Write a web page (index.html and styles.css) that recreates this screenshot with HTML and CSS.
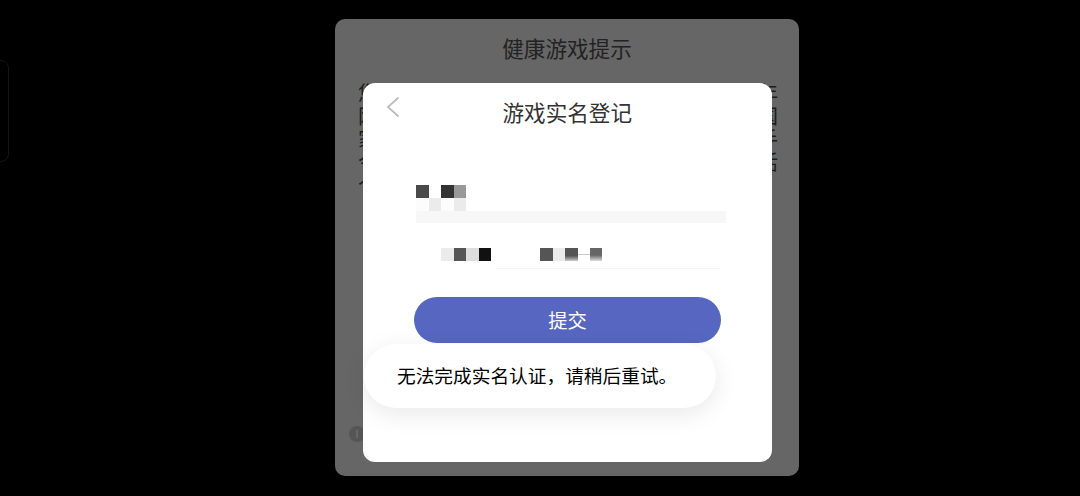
FILE: index.html
```html
<!DOCTYPE html>
<html lang="zh-CN">
<head>
<meta charset="utf-8">
<title>游戏实名登记</title>
<link rel="stylesheet" href="styles.css">
</head>
<body>
<div class="edge"></div>
<main class="dialog">
  <h2 class="dialog-title">健康游戏提示</h2>
  <div class="notice">
    <p><span>您</span><span>年</span></p>
    <p><span>网</span><span>国</span></p>
    <p><span>家</span><span>手</span></p>
    <p><span>今</span><span>活</span></p>
    <p><span>个</span></p>
  </div>
  <svg class="info" viewBox="0 0 16 16" aria-hidden="true"><circle cx="8" cy="8" r="8" fill="#555"/><rect x="7" y="4" width="2" height="8" fill="#666"/></svg>
  <section class="card">
    <header class="card-head">
      <svg class="back" viewBox="0 0 14 22" aria-hidden="true"><path d="M12.5 1.5 2 11l10.500 9.500" fill="none" stroke="#bdbdbd" stroke-width="1.800"/></svg>
      <h2 class="card-title">游戏实名登记</h2>
    </header>
    <div class="form">
      <div class="mosaic">
        <i class="px c4"></i><i class="px"></i><i class="px c3"></i><i class="px c9"></i>
        <i class="px cf"></i><i class="px ce"></i><i class="px cf"></i><i class="px ce"></i>
      </div>
      <div class="name-bar"></div>
      <div class="id-row">
        <div class="id-label">
          <i class="px ce"></i><i class="px c5"></i><i class="px cd"></i><i class="px c1"></i>
        </div>
        <div class="id-value">
          <i class="px c5"></i><i class="px ce"></i><i class="px fade"></i><i class="dash"></i><i class="px fade2"></i>
        </div>
      </div>
      <button class="submit" type="button">提交</button>
    </div>
  </section>
  <div class="toast">无法完成实名认证，请稍后重试。</div>
</main>
</body>
</html>
```
FILE: styles.css
```css
* { box-sizing: border-box; }
html, body { margin: 0; height: 496px; overflow: hidden; }
body {
  background: #000;
  font-family: "Noto Sans CJK SC", "Noto Sans", sans-serif;
  padding: 19px 0 0 335px;
}
.edge {
  position: absolute;
  left: -12px;
  top: 60px;
  width: 21px;
  height: 102px;
  border: 1px solid #141414;
  border-radius: 8px;
}
.dialog {
  position: relative;
  width: 464px;
  height: 457px;
  background: #666;
  border-radius: 10px;
}
.dialog-title {
  margin: 0;
  padding-top: 13px;
  height: 62px;
  text-align: center;
  font-size: 21.6px;
  line-height: 32px;
  font-weight: 400;
  color: #222;
}
.notice {
  margin-left: 23px;
  width: 420px;
  font-size: 20px;
  line-height: 23px;
  color: #1c1c1c;
}
.notice p { margin: 0; display: flex; justify-content: space-between; }
.info { position: absolute; left: 14px; top: 407px; width: 16px; height: 16px; }
.card {
  position: absolute;
  left: 27.5px;
  top: 64px;
  width: 409.5px;
  height: 379px;
  background: #fff;
  border-radius: 12px;
}
.card-head { position: relative; height: 58px; padding-top: 13px; }
.back { position: absolute; left: 23px; top: 13px; width: 14px; height: 22px; display: block; }
.card-title {
  margin: 0;
  text-align: center;
  font-size: 21.6px;
  line-height: 32px;
  font-weight: 400;
  color: #333;
}
.form { padding: 44px 0 0 51.5px; }
.px { display: block; width: 12.5px; height: 13px; }
.mosaic { margin-left: 2px; display: grid; grid-template-columns: repeat(4, 12.5px); width: 50px; }
.name-bar { margin-left: 2px; width: 310px; height: 12px; background: #f7f7f7; }
.id-row { display: flex; height: 46px; margin-left: 27px; position: relative; }
.id-label { display: flex; width: 54px; height: 13px; margin-top: 25px; }
.id-value {
  display: flex;
  width: 225px;
  height: 21px;
  margin: 25px 0 0 0;
  padding-left: 45px;
  border-bottom: 1px solid #f5f5f5;
}
.id-value .px { height: 13px; }
.dash { display: block; width: 12px; height: 1px; margin-top: 6px; background: #ccc; }
.c1 { background: #111; }
.c3 { background: #333; }
.c4 { background: #4a4a4a; }
.c5 { background: #555; }
.c9 { background: #999; }
.cd { background: #ddd; }
.ce { background: #ebebeb; }
.cf { background: #fcfcfc; }
.fade { background: linear-gradient(#555 60%, #ccc); }
.fade2 { background: linear-gradient(#666 55%, #ddd); }
.submit {
  display: block;
  margin: 28px 0 0 0;
  width: 307px;
  height: 46px;
  border: 0;
  border-radius: 23px;
  background: #5767c1;
  color: #fff;
  font: 400 19.300px/44px "Noto Sans CJK SC", sans-serif;
  padding: 0;
}
.toast {
  position: absolute;
  left: 29px;
  top: 325px;
  width: 352px;
  height: 64px;
  padding-left: 33px;
  border-radius: 32px;
  background: #fff;
  box-shadow: 0 6px 24px rgba(0, 0, 0, .09);
  color: #000;
  font-size: 18.700px;
  line-height: 62px;
  white-space: nowrap;
}
```
